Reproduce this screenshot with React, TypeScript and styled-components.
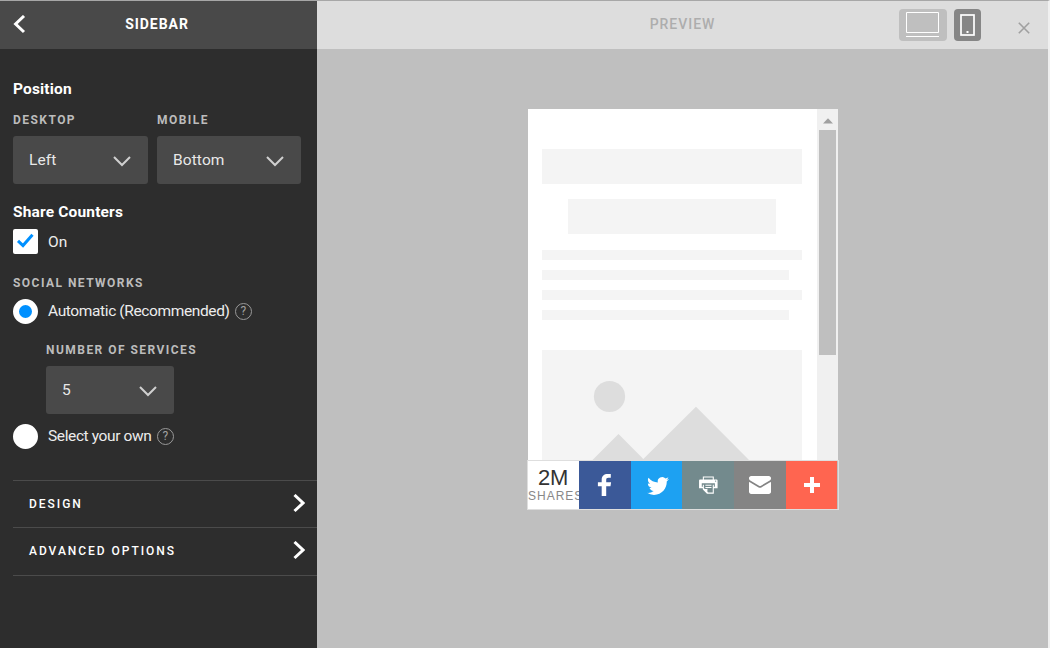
import React from 'react';
import styled, { createGlobalStyle } from 'styled-components';

const GlobalStyle = createGlobalStyle`
  * { box-sizing: border-box; }
  body { margin: 0; overflow: hidden; font-family: Roboto, sans-serif; }
  svg { display: block; flex: none; }
`;

const Shell = styled.div`
  display: flex;
  width: 1050px;
  height: 648px;
  border-top: 1px solid #a7a7a7;
  border-right: 2px solid #f0f0f0;
  background: #bfbfbf;
`;
const Sidebar = styled.aside`
  width: 317px;
  flex: none;
  background: #2d2d2d;
  color: #fff;
`;
const SidebarHeader = styled.header`
  display: grid;
  grid-template-columns: 40px 1fr 43px;
  align-items: center;
  height: 48px;
  background: #494949;
`;
const Title = styled.h1<{ $muted?: boolean }>`
  margin: 0;
  font-size: 14px;
  line-height: 46px;
  height: 48px;
  font-weight: ${p => (p.$muted ? 500 : 700)};
  letter-spacing: 0.95px;
  text-align: center;
  color: ${p => (p.$muted ? '#adadad' : '#fff')};
`;
const Form = styled.div`
  padding: 30px 0 0 13px;
`;
const Heading = styled.h2<{ $top?: number }>`
  margin: ${p => p.$top ?? 0}px 0 0;
  font-size: 15.5px;
  line-height: 20px;
  font-weight: 700;
  letter-spacing: 0.16px;
`;
const Label = styled.div`
  font-size: 12px;
  line-height: 16px;
  font-weight: 700;
  letter-spacing: 1.46px;
  color: #bcbcbc;
`;
const Fields = styled.div`
  display: flex;
  gap: 9px;
  margin-top: 13px;
`;
const Select = styled.div<{ $width: number }>`
  display: flex;
  align-items: center;
  justify-content: space-between;
  width: ${p => p.$width}px;
  height: 48px;
  margin-top: 8px;
  padding: 0 17px 0 16px;
  border-radius: 3px;
  background: #494949;
  color: #e8e8e8;
  font-size: 15.5px;
  letter-spacing: 0.1px;
`;
const Value = styled.span`
  line-height: 18px;
`;
const Option = styled.div<{ $top: number }>`
  display: flex;
  align-items: center;
  height: 25px;
  margin-top: ${p => p.$top}px;
`;
const OptionText = styled.span<{ $roomy?: boolean }>`
  margin-left: 10px;
  line-height: 24px;
  padding: ${p => (p.$roomy ? '1px 0 0' : '0 0 1px')};
  color: #ececec;
  font-size: 15.5px;
  letter-spacing: ${p => (p.$roomy ? 0 : -0.38)}px;
`;
const Checkbox = styled.span`
  display: grid;
  place-items: center;
  width: 25px;
  height: 25px;
  border-radius: 2px;
  background: #fff;
`;
const Radio = styled.span<{ $on?: boolean }>`
  width: 25px;
  height: 25px;
  border-radius: 50%;
  border: 6px solid #fff;
  background: ${p => (p.$on ? '#0090ff' : '#fff')};
`;
const Help = styled.span`
  display: grid;
  place-items: center;
  width: 17px;
  height: 17px;
  margin-left: 5.3px;
  border: 1px solid #999;
  border-radius: 50%;
  color: #a0a0a0;
  font-size: 12px;
  line-height: 15px;
`;
const Group = styled.div<{ $top: number; $left?: number }>`
  margin: ${p => p.$top}px 0 0 ${p => p.$left ?? 0}px;
`;
const Menu = styled.nav`
  margin-top: 31px;
  border-top: 1px solid #4b4b4b;
`;
const MenuItem = styled.div<{ $height: number }>`
  display: flex;
  align-items: center;
  justify-content: space-between;
  height: ${p => p.$height}px;
  padding: 0 12px 1px 16px;
  border-bottom: 1px solid #4b4b4b;
  font-size: 12px;
  font-weight: 500;
  letter-spacing: 1.97px;
`;
const Main = styled.main`
  flex: 1;
  display: flex;
  flex-direction: column;
  align-items: center;
`;
const PreviewHeader = styled.header`
  align-self: stretch;
  display: grid;
  grid-template-columns: 149px 1fr 149px;
  height: 48px;
  background: #ddd;
`;
const Devices = styled.div`
  display: flex;
  gap: 7px;
  padding-top: 8px;
`;
const Device = styled.div<{ $width: number; $active?: boolean }>`
  display: flex;
  justify-content: center;
  width: ${p => p.$width}px;
  height: 32px;
  border-radius: 4px;
  background: ${p => (p.$active ? '#868686' : '#bfbfbf')};
`;
const Close = styled.div`
  padding: 13px 0 0 30px;
`;
const Phone = styled.section`
  width: 312px;
  margin: 60px 0 0 1px;
`;
const Screen = styled.div`
  display: flex;
  height: 351px;
  margin: 0 1px;
`;
const Page = styled.div`
  display: flex;
  flex-direction: column;
  width: 289px;
  padding: 40px 15px 0 14px;
  background: #fff;
`;
const Block = styled.div<{ $width: number }>`
  align-self: center;
  width: ${p => p.$width}px;
  height: 35px;
  margin-bottom: 15px;
  background: #f4f4f4;
`;
const Line = styled.div<{ $short?: boolean }>`
  width: ${p => (p.$short ? 247 : 260)}px;
  height: 10px;
  margin: 1px 0 9px;
  background: #f4f4f4;
`;
const Photo = styled.div`
  margin-top: 21px;
  height: 110px;
  background: #f4f4f4;
`;
const Scrollbar = styled.div`
  display: flex;
  flex-direction: column;
  align-items: center;
  width: 21px;
  background: #f0f0f0;
`;
const ScrollArrow = styled.div`
  height: 21px;
  padding: 9px 0 0 0;
`;
const Thumb = styled.div`
  width: 17px;
  height: 225px;
  background: #bfbfbf;
`;
const ShareBar = styled.div`
  display: flex;
  height: 50px;
  border: 1px solid #dedede;
`;
const Count = styled.div`
  width: 51px;
  height: 48px;
  padding-top: 5px;
  overflow: hidden;
  background: #fff;
  font-family: 'Liberation Sans', sans-serif;
  text-align: center;
`;
const Number = styled.div`
  padding-right: 1px;
  font-size: 22px;
  line-height: 23px;
  letter-spacing: -0.3px;
  color: #333;
`;
const Shares = styled.div`
  font-size: 12px;
  line-height: 14px;
  letter-spacing: 1px;
  text-align: left;
  color: #888;
`;
const Service = styled.div<{ $color: string; $width?: number }>`
  display: grid;
  place-items: center;
  width: ${p => p.$width ?? 52}px;
  background: ${p => p.$color};
`;

const Chevron = () => (
  <svg width="18" height="14" viewBox="0 0 18 14" fill="none" stroke="#d0d0d0" strokeWidth="2">
    <path d="M1 4 9 12 17 4" />
  </svg>
);
const Arrow = () => (
  <svg width="12" height="20" viewBox="0 0 12 20" fill="none" stroke="#fff" strokeWidth="3">
    <path d="M1.5 1 10 9 1.5 17" />
  </svg>
);

export default function App() {
  return (
    <>
      <GlobalStyle />
      <Shell>
        <Sidebar>
          <SidebarHeader>
            <svg width="26" height="20" viewBox="0 0 26 20" fill="none" stroke="#fff" strokeWidth="3">
              <path d="M24 1 15.6 9 24 17" />
            </svg>
            <Title>SIDEBAR</Title>
          </SidebarHeader>
          <Form>
            <Heading>Position</Heading>
            <Fields>
              <div>
                <Label>DESKTOP</Label>
                <Select $width={135}><Value>Left</Value><Chevron /></Select>
              </div>
              <div>
                <Label>MOBILE</Label>
                <Select $width={144}><Value>Bottom</Value><Chevron /></Select>
              </div>
            </Fields>
            <Heading $top={18}>Share Counters</Heading>
            <Option $top={7}>
              <Checkbox>
                <svg width="19" height="17" viewBox="0 0 19 17" fill="none" stroke="#0090ff" strokeWidth="3">
                  <path d="M2 7.8 7 12.5 16.5 1.8" />
                </svg>
              </Checkbox>
              <OptionText $roomy>On</OptionText>
            </Option>
            <Group $top={21}>
              <Label>SOCIAL NETWORKS</Label>
            </Group>
            <Option $top={8}>
              <Radio $on />
              <OptionText>Automatic (Recommended)</OptionText>
              <Help>?</Help>
            </Option>
            <Group $top={18} $left={33}>
              <Label>NUMBER OF SERVICES</Label>
              <Select $width={128}><Value>5</Value><Chevron /></Select>
            </Group>
            <Option $top={10}>
              <Radio />
              <OptionText>Select your own</OptionText>
              <Help>?</Help>
            </Option>
            <Menu>
              <MenuItem $height={47}>DESIGN<Arrow /></MenuItem>
              <MenuItem $height={48}>ADVANCED OPTIONS<Arrow /></MenuItem>
            </Menu>
          </Form>
        </Sidebar>
        <Main>
          <PreviewHeader>
            <span />
            <Title $muted>PREVIEW</Title>
            <Devices>
              <Device $width={48}>
                <svg width="34" height="32" viewBox="0 0 34 32" fill="none" stroke="#fff">
                  <path d="M.5 3.5h32v20H.5zM0 27.5h33" />
                </svg>
              </Device>
              <Device $width={27} $active>
                <svg width="15" height="32" viewBox="0 0 15 32" fill="none" stroke="#fff">
                  <rect x="1" y="6" width="13" height="20" strokeWidth="1.7" />
                  <path d="M6.5 23h2" strokeWidth="2" />
                </svg>
              </Device>
              <Close>
                <svg width="12" height="12" viewBox="0 0 12 12" stroke="#a0a0a0" strokeWidth="1.6">
                  <path d="M.8.8l10.4 10.4m0-10.4L.8 11.2" />
                </svg>
              </Close>
            </Devices>
          </PreviewHeader>
          <Phone>
            <Screen>
              <Page>
                <Block $width={260} />
                <Block $width={208} />
                <Line />
                <Line $short />
                <Line />
                <Line $short />
                <Photo>
                  <svg width="260" height="110" viewBox="0 0 260 110" fill="#ddd">
                    <circle cx="67.5" cy="46.5" r="15.6" />
                    <path d="M49.5 111 76.5 84 101.3 109 154 56.7 208 111z" />
                  </svg>
                </Photo>
              </Page>
              <Scrollbar>
                <ScrollArrow>
                  <svg width="10" height="6" viewBox="0 0 10 6" fill="#a0a0a0">
                    <path d="M0 5.5 5 .3l5 5.2z" />
                  </svg>
                </ScrollArrow>
                <Thumb />
              </Scrollbar>
            </Screen>
            <ShareBar>
              <Count>
                <Number>2M</Number>
                <Shares>SHARES</Shares>
              </Count>
              <Service $color="#3b5998">
                <svg width="32" height="32" viewBox="0 0 32 32" fill="#fff">
                  <path d="M17.2 27V17.2h4.3l.6-4H17.2V11c0-1.5.6-2.2 2.2-2.2h2.4V5.1c-.7-.1-1.8-.2-3-.2-3.8 0-6.1 2-6.1 5.6v2.7H8.9v4h3.8V27z" />
                </svg>
              </Service>
              <Service $color="#1da1f2" $width={51}>
                <svg width="32" height="32" viewBox="0 0 32 32" fill="#fff">
                  <path d="M27.996 10.116c-.81.36-1.68.602-2.592.71a4.526 4.526 0 0 0 1.984-2.496 9.037 9.037 0 0 1-2.866 1.095 4.513 4.513 0 0 0-7.69 4.116 12.81 12.81 0 0 1-9.3-4.715 4.49 4.49 0 0 0-.612 2.27 4.51 4.51 0 0 0 2.008 3.755 4.495 4.495 0 0 1-2.044-.564v.057a4.515 4.515 0 0 0 3.62 4.425 4.52 4.52 0 0 1-2.04.077 4.517 4.517 0 0 0 4.217 3.134 9.055 9.055 0 0 1-5.604 1.93A9.18 9.18 0 0 1 6 23.85a12.773 12.773 0 0 0 6.918 2.027c8.3 0 12.84-6.876 12.84-12.84 0-.195-.005-.39-.014-.583a9.172 9.172 0 0 0 2.252-2.336" />
                </svg>
              </Service>
              <Service $color="#738a8d">
                <svg width="32" height="32" viewBox="0 0 32 32" fill="#fff">
                  <path d="M24.67 10.62h-2.86V7.49H10.82v3.12H7.95c-.5 0-.9.4-.9.9v7.66h3.77v1.31L15 24.66h6.81v-5.44h3.77v-7.7c-.01-.5-.41-.9-.91-.9zM11.88 8.56h8.86v2.06h-8.86V8.56zm10.98 9.18h-1.05v-2.1h-1.06v7.96H16.4c-1.58 0-.82-3.74-.82-3.74s-3.65.89-3.69-.78v-3.43h-1.06v2.06H9.77v-3.58h13.09v3.61zm.75-4.91c-.4 0-.72-.32-.72-.72 0-.4.32-.72.72-.72.4 0 .72.32.72.72 0 .4-.32.72-.72.72zm-4.12 2.96h-6.1v1.06h6.1v-1.06zm-6.11 3.15h6.1v-1.06h-6.1v1.06z" />
                </svg>
              </Service>
              <Service $color="#848484">
                <svg width="32" height="32" viewBox="0 0 32 32" fill="#fff">
                  <path d="M27 22.757c0 1.24-.988 2.243-2.19 2.243H7.19C5.98 25 5 23.994 5 22.757V13.67c0-.556.39-.773.855-.496l8.78 5.238c.782.467 1.95.467 2.73 0l8.78-5.238c.472-.28.855-.063.855.495v9.087z" />
                  <path d="M27 9.243C27 8.006 26.02 7 24.81 7H7.19C5.988 7 5 8.004 5 9.243v.465c0 .554.385 1.232.857 1.514l9.61 5.733c.267.16.8.16 1.067 0l9.61-5.733c.473-.283.856-.96.856-1.514v-.465z" />
                </svg>
              </Service>
              <Service $color="#ff6550" $width={51}>
                <svg width="32" height="32" viewBox="0 0 32 32" fill="#fff">
                  <path d="M14 8h4v6h6v4h-6v6h-4v-6H8v-4h6z" />
                </svg>
              </Service>
            </ShareBar>
          </Phone>
        </Main>
      </Shell>
    </>
  );
}
